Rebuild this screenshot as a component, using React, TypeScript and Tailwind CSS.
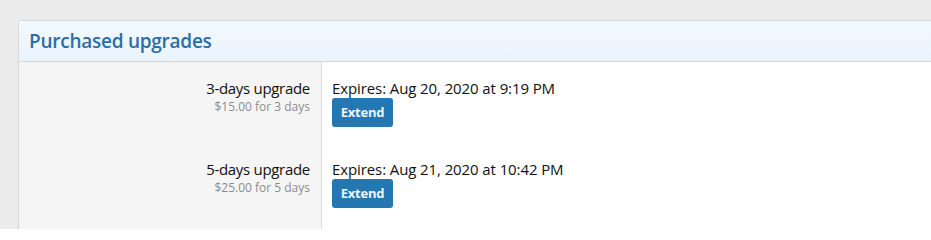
import React from "react";

const rows = [
  { name: "3-days upgrade", price: "$15.00 for 3 days", expires: "Expires: Aug 20, 2020 at 9:19 PM" },
  { name: "5-days upgrade", price: "$25.00 for 5 days", expires: "Expires: Aug 21, 2020 at 10:42 PM" },
];

export default function App() {
  return (
    <div
      className="w-[931px] h-[229px] overflow-hidden bg-[#ebebeb] pt-[20px] pl-[18px]"
      style={{ fontFamily: "'Open Sans', 'Noto Sans', sans-serif" }}
    >
      <div className="w-[940px] border border-[#d8d8d8] rounded-t-[3px] bg-white">
        <div className="h-[41px] flex items-center pl-[10px] bg-gradient-to-b from-[#f3f8fe] to-[#eaf4fd] border-b border-[#d8d8d8] rounded-t-[3px]">
          <h2 className="text-[19px] font-semibold text-[#2b6ea5] tracking-[-0.25px]">Purchased upgrades</h2>
        </div>
        {rows.map((r) => (
          <div key={r.name} className="flex">
            <div className="w-[303px] shrink-0 bg-[#f5f5f5] border-r border-[#dedede] py-4 pr-[11px] text-right">
              <div className="text-[15px] leading-[20px] text-[#111111] tracking-[-0.3px]">{r.name}</div>
              <div className="text-[12px] leading-[17px] text-[#8c8c8c]">{r.price}</div>
            </div>
            <div className="py-4 pl-[10px]">
              <div className="text-[15px] leading-[20px] text-[#111111] tracking-[-0.1px]">{r.expires}</div>
              <button className="h-[29px] w-[61px] rounded-[3px] bg-[#2577b1] text-[#eef5fb] text-[13px] font-bold tracking-[-0.2px]">
                Extend
              </button>
            </div>
          </div>
        ))}
        <div className="flex h-[40px]">
          <div className="w-[303px] shrink-0 bg-[#f5f5f5] border-r border-[#dedede]" />
        </div>
      </div>
    </div>
  );
}
